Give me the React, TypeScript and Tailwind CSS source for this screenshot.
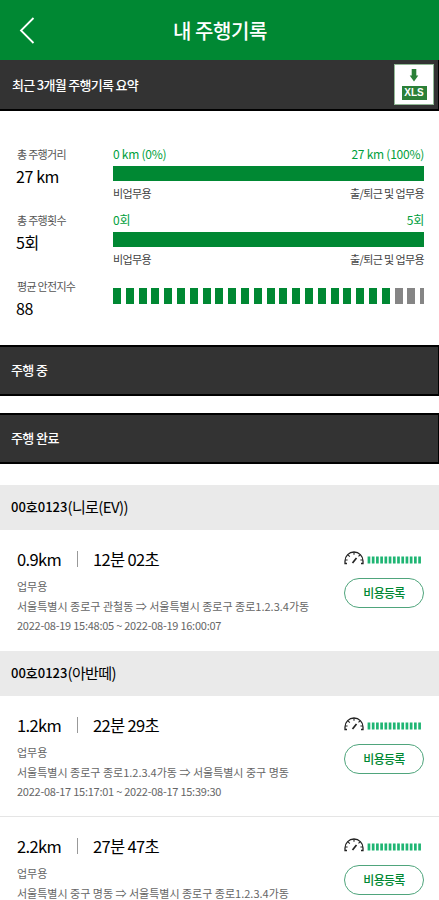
type Trip = {
  distance: string;
  duration: string;
  route: string;
  period?: string;
};

const niroTrips: Trip[] = [
  {
    distance: '0.9km',
    duration: '12분 02초',
    route: '서울특별시 종로구 관철동 ⇒ 서울특별시 종로구 종로1.2.3.4가동',
    period: '2022-08-19 15:48:05 ~ 2022-08-19 16:00:07',
  },
];

const avanteTrips: Trip[] = [
  {
    distance: '1.2km',
    duration: '22분 29초',
    route: '서울특별시 종로구 종로1.2.3.4가동 ⇒ 서울특별시 중구 명동',
    period: '2022-08-17 15:17:01 ~ 2022-08-17 15:39:30',
  },
  {
    distance: '2.2km',
    duration: '27분 47초',
    route: '서울특별시 중구 명동 ⇒ 서울특별시 종로구 종로1.2.3.4가동',
  },
];

function SectionBar({ title }: { title: string }) {
  return (
    <div className="h-[51px] shrink-0 flex items-center pl-[11px] pb-[2px] bg-[#333] border-y-2 border-r border-black text-white">
      <span className="text-[13px] font-medium tracking-[-0.6px]">{title}</span>
    </div>
  );
}

function VehicleBar({ plate, model }: { plate: string; model: string }) {
  return (
    <div className="h-[45px] shrink-0 flex items-center pl-[11px] pb-px bg-[#eaeaea] text-black">
      <span className="text-[13px] font-medium">{plate}</span>
      <span className="text-[15px] tracking-[-0.6px]">{model}</span>
    </div>
  );
}

function StatLabel({ label, value }: { label: string; value: string }) {
  return (
    <div className="w-[97px] shrink-0 pl-px">
      <div className="h-[21px] leading-[21px] text-[11px] tracking-[-0.7px] text-[#555]">{label}</div>
      <div className="h-[22px] leading-[22px] text-[16px] tracking-[-0.4px] text-black -ml-px">{value}</div>
    </div>
  );
}

function UsageBar({ left, right }: { left: string; right: string }) {
  return (
    <div className="flex-1">
      <div className="h-[22px] leading-[20px] flex justify-between text-[12px] tracking-[-0.25px] text-[#00a03c]">
        <span>{left}</span>
        <span>{right}</span>
      </div>
      <div className="h-[15px] bg-[#008833]" />
      <div className="h-[22px] leading-[24px] flex justify-between text-[11px] tracking-[-0.6px] text-[#444]">
        <span>비업무용</span>
        <span>출/퇴근 및 업무용</span>
      </div>
    </div>
  );
}

function Gauge() {
  return (
    <svg width="20" height="14" viewBox="0 0 20 14" fill="none" stroke="#222" strokeWidth="1.3">
      <path d="M3 12.5H1V10A9 9 0 0 1 19 10V12.5H17" />
      <path d="M10 1v2.8M4 3.8l1.8 1.8M16 3.8l-1.5 1.5M1.2 9h2.4M16.4 9h2.4" strokeWidth="1.1" />
      <path d="M8.5 12l4-5" strokeWidth="1.7" />
    </svg>
  );
}

function ScoreTicks() {
  return (
    <svg className="ml-[3px] mt-[5px]" width="54" height="8" viewBox="0 0 54 8" fill="#1fb573">
      {Array.from({ length: 13 }, (_, i) => (
        <rect key={i} x={0.6 + i * 4.22} y="0.5" width="2.7" height="7" />
      ))}
    </svg>
  );
}

function TripRow({ trip }: { trip: Trip }) {
  return (
    <div className="h-[121px] shrink-0 flex justify-between pl-[17px] pr-[15px] pt-[17px]">
      <div className="whitespace-nowrap">
        <div className="h-6 flex items-center text-[16.5px] tracking-[-0.65px] text-black">
          <span className="w-[60px]">{trip.distance}</span>
          <span className="w-px h-4 bg-[#999]" />
          <span className="ml-[15px]">{trip.duration}</span>
        </div>
        <div className="mt-[6px] text-[11px] leading-[19.5px] text-[#666]">
          <div>업무용</div>
          <div>{trip.route}</div>
          {trip.period && <div className="tracking-[-0.25px]">{trip.period}</div>}
        </div>
      </div>
      <div className="w-20 shrink-0 pt-1">
        <div className="flex items-start">
          <Gauge />
          <ScoreTicks />
        </div>
        <button className="mt-[13px] w-20 h-[30px] block rounded-full border border-[#4fa57c] text-[12px] font-medium tracking-[-0.7px] text-[#008833]">
          비용등록
        </button>
      </div>
    </div>
  );
}

export default function App() {
  return (
    <div className="w-[439px] h-[900px] overflow-hidden flex flex-col bg-white font-['Noto_Sans_CJK_KR',sans-serif]">
      <header className="h-[60px] shrink-0 flex items-center bg-[#008833] text-white">
        <svg className="ml-[19px]" width="16" height="28" viewBox="0 0 16 28" fill="none" stroke="white" strokeWidth="1.8">
          <path d="M14.5 2L2 14.5L14.5 27" />
        </svg>
        <h1 className="flex-1 pr-[34px] pt-[2px] text-center text-[20px] font-medium tracking-[-0.4px]">내 주행기록</h1>
      </header>

      <div className="h-[51px] shrink-0 flex items-center justify-between pl-3 pr-1 bg-[#333] border-b-2 border-r border-black text-white">
        <span className="text-[13px] font-medium tracking-[-0.7px]">최근 3개월 주행기록 요약</span>
        <button className="w-10 h-[41px] flex flex-col items-center bg-white border border-[#91b995] pt-1">
          <svg width="10" height="13" viewBox="0 0 10 13" fill="#2b8038">
            <path d="M2.7 0H7.3V6.5H9.3L5 12.5L0.7 6.5H2.7Z" />
          </svg>
          <span className="mt-[4px] w-[25px] h-[14px] leading-[14px] bg-[#2b8038] text-white text-[10px] font-bold text-center font-['Liberation_Sans',sans-serif]">
            XLS
          </span>
        </button>
      </div>

      <section className="h-[234px] shrink-0 pl-4 pr-[15px] pt-[33px]">
        <div className="h-[66px] flex">
          <StatLabel label="총 주행거리" value="27 km" />
          <UsageBar left="0 km (0%)" right="27 km (100%)" />
        </div>
        <div className="h-[66px] flex">
          <StatLabel label="총 주행횟수" value="5회" />
          <UsageBar left="0회" right="5회" />
        </div>
        <div className="flex">
          <StatLabel label="평균 안전지수" value="88" />
          <div className="mt-[12px] flex-1 h-4 flex gap-[4.8px] overflow-hidden">
            {Array.from({ length: 25 }, (_, i) => (
              <div key={i} className={`w-2 h-4 shrink-0 ${i < 22 ? 'bg-[#008833]' : 'bg-[#858585]'}`} />
            ))}
          </div>
        </div>
      </section>

      <SectionBar title="주행 중" />
      <div className="h-[17px] shrink-0" />
      <SectionBar title="주행 완료" />
      <div className="h-[21px] shrink-0" />

      <VehicleBar plate="00호0123" model="(니로(EV))" />
      {niroTrips.map((trip) => (
        <TripRow key={trip.distance} trip={trip} />
      ))}
      <VehicleBar plate="00호0123" model="(아반떼)" />
      <div className="divide-y divide-[#e5e5e5]">
        {avanteTrips.map((trip) => (
          <TripRow key={trip.distance} trip={trip} />
        ))}
      </div>
    </div>
  );
}
